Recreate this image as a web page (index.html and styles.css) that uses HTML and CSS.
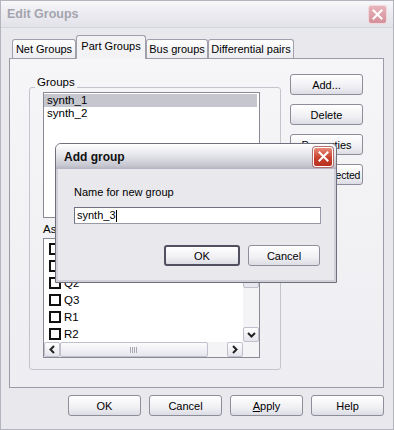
FILE: index.html
```html
<!DOCTYPE html>
<html>
  <head>
    <title>Edit Groups</title>
    <link rel="stylesheet" href="styles.css">
  </head>
  <body>
    <div class="window">
      <div class="titlebar">
        <span class="title">Edit Groups</span>
        <span class="close-btn inactive">
          <svg width="11" height="11" viewBox="0 0 11 11"><path d="M1.5 1.5 L9.5 9.5 M9.5 1.5 L1.5 9.5" stroke="#fff" stroke-width="2" stroke-linecap="square"/></svg>
        </span>
      </div>
      <div class="client">
        <div class="tabs">
          <div class="tab tab-net">Net Groups</div>
          <div class="tab tab-part active">Part Groups</div>
          <div class="tab tab-bus">Bus groups</div>
          <div class="tab tab-diff">Differential pairs</div>
        </div>
        <div class="panel">
          <div class="groupbox">
            <span class="legend">Groups</span>
            <div class="listbox groups-list">
              <div class="item selected">synth_1</div>
              <div class="item">synth_2</div>
            </div>
            <div class="field-label">Assigned parts</div>
            <div class="listbox check-list">
              <div class="check-items">
                <div class="check-row"><span class="checkbox"></span>C1</div>
                <div class="check-row"><span class="checkbox"></span>Q1</div>
                <div class="check-row"><span class="checkbox"></span>Q2</div>
                <div class="check-row"><span class="checkbox"></span>Q3</div>
                <div class="check-row"><span class="checkbox"></span>R1</div>
                <div class="check-row"><span class="checkbox"></span>R2</div>
              </div>
              <div class="vscroll">
                <div class="sb-btn">
                  <svg width="9" height="6" viewBox="0 0 9 6"><path d="M1 5 L4.5 1.5 L8 5" fill="none" stroke="#222" stroke-width="2"/></svg>
                </div>
                <div class="sb-thumb vthumb"></div>
                <div class="sb-track"></div>
                <div class="sb-btn">
                  <svg width="9" height="6" viewBox="0 0 9 6"><path d="M1 1 L4.5 4.5 L8 1" fill="none" stroke="#222" stroke-width="2"/></svg>
                </div>
              </div>
              <div class="hscroll">
                <div class="sb-btn">
                  <svg width="6" height="9" viewBox="0 0 6 9"><path d="M5 1 L1.5 4.5 L5 8" fill="none" stroke="#222" stroke-width="2"/></svg>
                </div>
                <div class="sb-thumb hthumb"><span class="grip"></span></div>
                <div class="sb-track"></div>
                <div class="sb-btn">
                  <svg width="6" height="9" viewBox="0 0 6 9"><path d="M1 1 L4.5 4.5 L1 8" fill="none" stroke="#222" stroke-width="2"/></svg>
                </div>
              </div>
              <div class="corner"></div>
            </div>
          </div>
          <div class="side-buttons">
            <button class="btn">Add...</button>
            <button class="btn">Delete</button>
            <button class="btn">Properties</button>
            <button class="btn small">Show Selected</button>
          </div>
        </div>
        <div class="footer">
          <button class="btn">OK</button>
          <button class="btn">Cancel</button>
          <button class="btn"><u>A</u>pply</button>
          <button class="btn">Help</button>
        </div>
      </div>

      <div class="dialog">
        <div class="dialog-titlebar">
          <span class="dialog-title">Add group</span>
          <span class="close-btn active">
            <svg width="11" height="11" viewBox="0 0 11 11"><path d="M1.5 1.5 L9.5 9.5 M9.5 1.5 L1.5 9.5" stroke="#fff" stroke-width="2" stroke-linecap="square"/></svg>
          </span>
        </div>
        <div class="dialog-body">
          <div class="dialog-label">Name for new group</div>
          <div class="textbox">synth_3<span class="caret"></span></div>
          <div class="dialog-buttons">
            <button class="btn default">OK</button>
            <button class="btn">Cancel</button>
          </div>
        </div>
      </div>
    </div>
  </body>
</html>
```

FILE: styles.css
```css
body {
  margin: 0;
  font: 11px "Liberation Sans", Arial, sans-serif;
  color: #000;
}
.window {
  position: relative;
  width: 394px;
  height: 430px;
  box-sizing: border-box;
  border: 1px solid #b4b4be;
  background: #e8e8ed;
}
.titlebar {
  height: 26px;
  display: flex;
  align-items: center;
  justify-content: space-between;
  padding: 0 6px 0 6px;
  background: linear-gradient(#f8f8fb, #ececf1 45%, #e2e2e9);
  border-bottom: 1px solid #d4d4dc;
}
.title {
  font-size: 12.5px;
  font-weight: bold;
  color: #a4a4ae;
}
.close-btn {
  width: 19px;
  height: 19px;
  box-sizing: border-box;
  border-radius: 3px;
  display: flex;
  align-items: center;
  justify-content: center;
}
.close-btn.inactive {
  background: linear-gradient(#e8b4bc, #d48f9a);
  border: 1px solid #f2d8dc;
}
.close-btn.active {
  width: 20px;
  height: 20px;
  background: linear-gradient(#e88a78, #c8402e 55%, #b8321f);
  border: 1px solid #fff;
  box-shadow: 0 0 0 1px #b07070;
}
.client {
  padding: 7px 9px 0 8px;
}
.tabs {
  display: flex;
  align-items: flex-end;
  height: 23px;
  padding-left: 3px;
}
.tab {
  height: 19px;
  box-sizing: border-box;
  border: 1px solid #a0a0ac;
  border-bottom: none;
  border-radius: 3px 3px 0 0;
  background: linear-gradient(#ffffff, #ececf1);
  display: flex;
  align-items: center;
  justify-content: center;
  font-size: 11px;
  white-space: nowrap;
}
.tab-net { width: 64px; }
.tab-part { width: 70px; }
.tab-bus { width: 62px; }
.tab-diff { width: 86px; }
.tab.active {
  height: 24px;
  margin-bottom: -1px;
  position: relative;
  z-index: 1;
  background: #f3f3f6;
  padding-bottom: 3px;
}
.panel {
  height: 330px;
  box-sizing: border-box;
  border: 1px solid #9c9ca8;
  background: linear-gradient(#f6f6f8, #eeeef2);
  display: flex;
  align-items: flex-start;
  padding: 15px 0 0 19px;
}
.groupbox {
  position: relative;
  width: 252px;
  height: 283px;
  box-sizing: border-box;
  margin-top: 13px;
  border: 1px solid #c4c4cc;
  border-radius: 3px;
  padding: 4px 0 0 13px;
}
.legend {
  position: absolute;
  left: 5px;
  top: -12px;
  padding: 0 2px;
  background: #f5f5f7;
  font-size: 11.5px;
}
.listbox {
  width: 217px;
  box-sizing: border-box;
  border: 1px solid #8a8a96;
  background: #fff;
}
.groups-list {
  height: 126px;
  padding: 1px 0;
}
.item {
  height: 13px;
  line-height: 13px;
  padding-left: 3px;
  font-size: 11.5px;
}
.item.selected {
  background: #c6c6ce;
  margin-right: 2px;
}
.field-label {
  margin-top: 5px;
  height: 15px;
  font-size: 11.5px;
}
.check-list {
  height: 120px;
  display: grid;
  grid-template-columns: 1fr 16px;
  grid-template-rows: 1fr 15px;
}
.check-items {
  padding: 1px 0 0 5px;
  overflow: hidden;
}
.check-row {
  height: 17px;
  display: flex;
  align-items: center;
  font-size: 11.5px;
}
.checkbox {
  width: 12px;
  height: 12px;
  box-sizing: border-box;
  border: 2px solid #111;
  margin-right: 3px;
}
.vscroll {
  display: flex;
  flex-direction: column;
  background: #f4f4f7;
}
.vscroll .sb-track {
  flex: 1;
}
.hscroll {
  display: flex;
  background: #f4f4f7;
}
.hscroll .sb-track {
  flex: 1;
}
.sb-btn {
  width: 16px;
  height: 15px;
  box-sizing: border-box;
  border: 1px solid #c0c0cc;
  border-radius: 2px;
  background: linear-gradient(#ffffff, #e4e4ec);
  display: flex;
  align-items: center;
  justify-content: center;
}
.sb-thumb {
  box-sizing: border-box;
  border: 1px solid #c0c0cc;
  border-radius: 2px;
  background: linear-gradient(#fbfbfd, #e6e6ee);
  display: flex;
  align-items: center;
  justify-content: center;
}
.hthumb {
  width: 148px;
}
.vthumb {
  height: 34px;
}
.grip {
  width: 8px;
  height: 6px;
  background: repeating-linear-gradient(90deg, #a8a8b4 0 1px, transparent 1px 2px);
}
.corner {
  background: #f4f4f7;
}
.side-buttons {
  display: flex;
  flex-direction: column;
  gap: 9px;
  margin-left: 9px;
}
.btn {
  width: 73px;
  height: 21px;
  box-sizing: border-box;
  border: 1px solid #8e8e9a;
  border-radius: 3px;
  background: linear-gradient(#ffffff, #f0f0f4 60%, #dcdce4);
  font: 11px "Liberation Sans", Arial, sans-serif;
  color: #000;
  padding: 0;
  white-space: nowrap;
  overflow: hidden;
}
.btn.small {
  font-size: 10.5px;
  letter-spacing: -0.2px;
}
.footer {
  display: flex;
  justify-content: flex-end;
  gap: 8px;
  padding-top: 7px;
}
.dialog {
  position: absolute;
  left: 54px;
  top: 142px;
  width: 282px;
  height: 140px;
  box-sizing: border-box;
  border: 1px solid #70707c;
  border-radius: 6px 6px 0 0;
  background: #e8e8ed;
  box-shadow: inset 0 0 0 2px #d0d0d8;
}
.dialog-titlebar {
  height: 25px;
  display: flex;
  align-items: center;
  justify-content: space-between;
  padding: 0 3px 0 8px;
  border-radius: 5px 5px 0 0;
  background: linear-gradient(#ffffff, #e8e8ee 40%, #c8c8d2 85%, #b4b4c0);
}
.dialog-title {
  font-size: 12px;
  font-weight: bold;
  color: #101010;
}
.dialog-body {
  padding: 17px 0 0 18px;
}
.dialog-label {
  height: 14px;
  font-size: 11px;
}
.textbox {
  margin-top: 7px;
  width: 247px;
  height: 17px;
  box-sizing: border-box;
  border: 1px solid #9a9aa6;
  border-top-color: #707080;
  border-left-color: #707080;
  background: #fff;
  padding-left: 2px;
  font-size: 11px;
  line-height: 15px;
  display: flex;
  align-items: center;
}
.caret {
  width: 1px;
  height: 12px;
  background: #000;
}
.dialog-buttons {
  display: flex;
  gap: 8px;
  margin-top: 21px;
  margin-left: 90px;
}
.dialog-buttons .btn {
  width: 72px;
}
.btn.default {
  width: 76px;
  border: 2px solid #505060;
}
```
